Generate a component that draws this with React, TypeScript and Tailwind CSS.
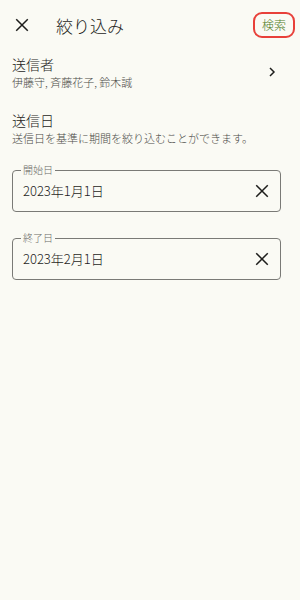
import React from 'react'

const XIcon = ({ className }: { className?: string }) => (
  <svg viewBox="0 0 24 24" className={className} fill="none" stroke="currentColor" strokeWidth={2} strokeLinecap="square">
    <path d="M5 5L19 19M19 5L5 19" />
  </svg>
)

const DateField: React.FC<{ label: string; value: string }> = ({ label, value }) => (
  <div className="relative ml-3 mr-[19px] h-[42px] rounded border border-[#7a7a76] flex items-center pl-[10px] pr-[9px]">
    <span className="absolute -top-[7px] left-[8px] px-[2px] bg-[#fafaf4] text-[10px] leading-[12px] text-[#6b6b66]">{label}</span>
    <span className="flex-1 text-[13px] text-[#1d1d1b]">{value}</span>
    <XIcon className="w-[18px] h-[18px] text-[#1d1d1b]" />
  </div>
)

export default function App() {
  return (
    <div
      className="w-[300px] h-[600px] bg-[#fafaf4] text-[#1d1d1b] font-light"
      style={{ fontFamily: '"Noto Sans CJK JP", "Noto Sans", sans-serif' }}
    >
      <div className="h-[50px] flex items-center pl-[13px] pr-[5px]">
        <XIcon className="w-[18px] h-[18px]" />
        <div className="ml-[25px] flex-1 text-[17px] leading-none">絞り込み</div>
        <div className="border-2 border-[#e8403a] rounded-[9px] px-[7px] py-[3px] text-[12px] leading-[16px] text-[#4f7a1e]">検索</div>
      </div>

      <div className="flex items-center px-3 mt-[4px]">
        <div className="flex-1">
          <div className="text-[14px] leading-[20px]">送信者</div>
          <div className="text-[11px] leading-[16px] text-[#4a4a46]">伊藤守, 斉藤花子, 鈴木誠</div>
        </div>
        <svg viewBox="0 0 24 24" className="w-[16px] h-[16px] mr-[8px]" fill="none" stroke="currentColor" strokeWidth={2.2}>
          <path d="M9 6l6 6-6 6" />
        </svg>
      </div>

      <div className="px-3 mt-[20px]">
        <div className="text-[14px] leading-[20px]">送信日</div>
        <div className="text-[11px] leading-[16px] text-[#4a4a46]">送信日を基準に期間を絞り込むことができます。</div>
      </div>

      <div className="mt-[24px]">
        <DateField label="開始日" value="2023年1月1日" />
      </div>
      <div className="mt-[26px]">
        <DateField label="終了日" value="2023年2月1日" />
      </div>
    </div>
  )
}
